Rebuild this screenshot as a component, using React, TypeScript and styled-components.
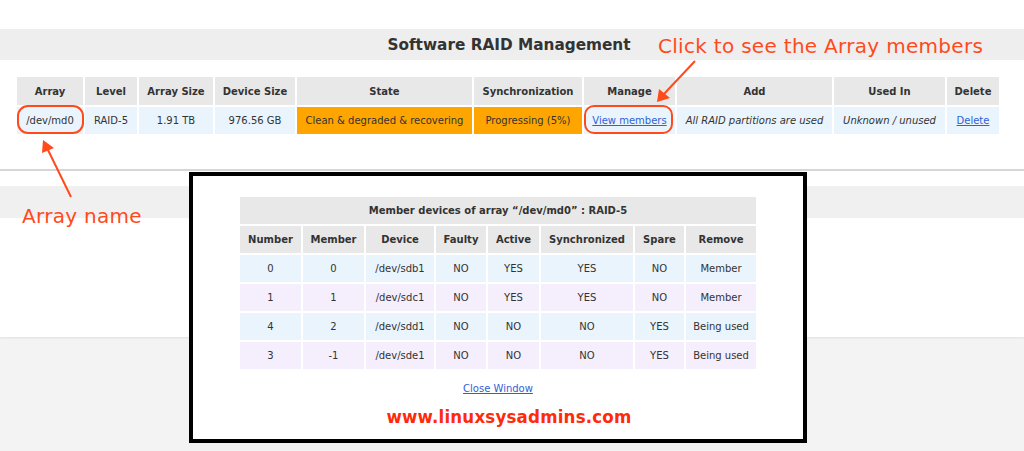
import React from "react";
import styled, { createGlobalStyle } from "styled-components";

const Global = createGlobalStyle`
  html, body { margin: 0; padding: 0; }
  body { font-family: "DejaVu Sans", Verdana, sans-serif; background: #ffffff; }
`;

const Page = styled.div`
  position: relative;
  width: 1024px;
  height: 451px;
  overflow: hidden;
  display: flex;
  flex-direction: column;
  background: #ffffff;
`;

const TopSpacer = styled.div`
  height: 29px;
  flex: none;
`;

const TitleBar = styled.div`
  height: 31px;
  flex: none;
  background: #eeeeee;
  display: flex;
  align-items: center;
  justify-content: center;
  padding-right: 6px;
  font-weight: bold;
  font-size: 15.3px;
  color: #333333;
`;

const Content = styled.div`
  height: 109px;
  flex: none;
  padding: 15px 0 0 15px;
  box-sizing: border-box;
`;

const Table = styled.table`
  border-collapse: separate;
  border-spacing: 2px;
  table-layout: fixed;
  font-size: 10px;
  color: #333333;
`;

const HeadCell = styled.th<{ $w?: number; $h?: number }>`
  width: ${(p) => (p.$w ? `${p.$w}px` : "auto")};
  height: ${(p) => p.$h ?? 27}px;
  background: #e8e8e8;
  font-weight: bold;
  text-align: center;
  padding: 0 3px;
  box-sizing: border-box;
  white-space: nowrap;
`;

const Cell = styled.td<{ $bg?: string; $italic?: boolean }>`
  height: 27px;
  background: ${(p) => p.$bg ?? "#eaf4fd"};
  text-align: center;
  padding: 0 3px;
  box-sizing: border-box;
  white-space: nowrap;
  font-style: ${(p) => (p.$italic ? "italic" : "normal")};
`;

const Link = styled.a`
  color: #2f62d6;
  text-decoration: underline;
  cursor: pointer;
`;

const Panel = styled.div`
  height: 168px;
  flex: none;
  border-top: 2px solid #d6d6d6;
  padding-top: 15px;
  box-sizing: border-box;
  background: #ffffff;
  box-shadow: 0 1px 2px rgba(0, 0, 0, 0.08);
  position: relative;
`;

const PanelBar = styled.div`
  height: 32px;
  background: #f0f0f0;
`;

const Footer = styled.div`
  flex: 1;
  background: #f3f3f3;
`;

const Modal = styled.div`
  position: absolute;
  left: 189px;
  top: 172px;
  width: 618px;
  height: 271px;
  box-sizing: border-box;
  border: 4px solid #000000;
  background: #ffffff;
  display: flex;
  flex-direction: column;
  align-items: center;
  padding-top: 19px;
`;

const CloseLink = styled(Link)`
  margin-top: 12px;
  font-size: 10px;
  line-height: 12px;
`;

const Watermark = styled.div`
  margin-top: 11px;
  margin-left: 22px;
  font-size: 18.5px;
  color: #ff2a0a;
  font-weight: bold;
  font-family: "DejaVu Sans Condensed", "DejaVu Sans", sans-serif;
  letter-spacing: 0.2px;
`;

const Note = styled.div<{ $x: number; $y: number }>`
  position: absolute;
  left: ${(p) => p.$x}px;
  top: ${(p) => p.$y}px;
  color: #ff4a1c;
  font-size: 20px;
  line-height: 22px;
  font-family: "DejaVu Sans", sans-serif;
  white-space: nowrap;
  letter-spacing: 0.3px;
`;

const Overlay = styled.svg`
  position: absolute;
  left: 0;
  top: 0;
  pointer-events: none;
`;

const raidCols: [string, number][] = [
  ["Array", 66],
  ["Level", 52],
  ["Array Size", 74],
  ["Device Size", 80],
  ["State", 175],
  ["Synchronization", 108],
  ["Manage", 91],
  ["Add", 155],
  ["Used In", 111],
  ["Delete", 52],
];

const memberCols: [string, number][] = [
  ["Number", 61],
  ["Member", 61],
  ["Device", 68],
  ["Faulty", 50],
  ["Active", 51],
  ["Synchronized", 92],
  ["Spare", 49],
  ["Remove", 70],
];

const members = [
  ["0", "0", "/dev/sdb1", "NO", "YES", "YES", "NO", "Member"],
  ["1", "1", "/dev/sdc1", "NO", "YES", "YES", "NO", "Member"],
  ["4", "2", "/dev/sdd1", "NO", "NO", "NO", "YES", "Being used"],
  ["3", "-1", "/dev/sde1", "NO", "NO", "NO", "YES", "Being used"],
];

const ORANGE = "#ffa500";
const BLUE = "#eaf4fd";
const LAVENDER = "#f5eefc";
const RED = "#ff4a1c";

export default function App() {
  return (
    <>
      <Global />
      <Page>
        <TopSpacer />
        <TitleBar>Software RAID Management</TitleBar>
        <Content>
          <Table>
            <thead>
              <tr>
                {raidCols.map(([t, w]) => (
                  <HeadCell key={t} $w={w} $h={28}>
                    {t}
                  </HeadCell>
                ))}
              </tr>
            </thead>
            <tbody>
              <tr>
                <Cell>/dev/md0</Cell>
                <Cell>RAID-5</Cell>
                <Cell>1.91 TB</Cell>
                <Cell>976.56 GB</Cell>
                <Cell $bg={ORANGE}>Clean &amp; degraded &amp; recovering</Cell>
                <Cell $bg={ORANGE}>Progressing (5%)</Cell>
                <Cell>
                  <Link>View members</Link>
                </Cell>
                <Cell $italic>All RAID partitions are used</Cell>
                <Cell $italic>Unknown / unused</Cell>
                <Cell>
                  <Link>Delete</Link>
                </Cell>
              </tr>
            </tbody>
          </Table>
        </Content>
        <Panel>
          <PanelBar />
        </Panel>
        <Footer />

        <Modal>
          <Table>
            <thead>
              <tr>
                <HeadCell colSpan={8}>
                  Member devices of array “/dev/md0” : RAID-5
                </HeadCell>
              </tr>
              <tr>
                {memberCols.map(([t, w]) => (
                  <HeadCell key={t} $w={w}>
                    {t}
                  </HeadCell>
                ))}
              </tr>
            </thead>
            <tbody>
              {members.map((row, i) => (
                <tr key={i}>
                  {row.map((v, j) => (
                    <Cell key={j} $bg={i % 2 === 0 ? BLUE : LAVENDER}>
                      {v}
                    </Cell>
                  ))}
                </tr>
              ))}
            </tbody>
          </Table>
          <CloseLink>Close Window</CloseLink>
          <Watermark>www.linuxsysadmins.com</Watermark>
        </Modal>

        <Overlay width={1024} height={451} viewBox="0 0 1024 451">
          <rect x={18} y={106} width={65} height={27} rx={10} fill="none" stroke={RED} strokeWidth={2} />
          <rect x={585} y={106} width={87} height={27} rx={9} fill="none" stroke={RED} strokeWidth={2} />
          <line x1={695} y1={61} x2={664} y2={94} stroke={RED} strokeWidth={2} />
          <polygon points="657,102 659,89 670,98" fill={RED} />
          <line x1={71} y1={197} x2={48} y2={150} stroke={RED} strokeWidth={2} />
          <polygon points="43,140 42,153 54,148" fill={RED} />
        </Overlay>
        <Note $x={658} $y={35}>Click to see the Array members</Note>
        <Note $x={22} $y={205}>Array name</Note>
      </Page>
    </>
  );
}
